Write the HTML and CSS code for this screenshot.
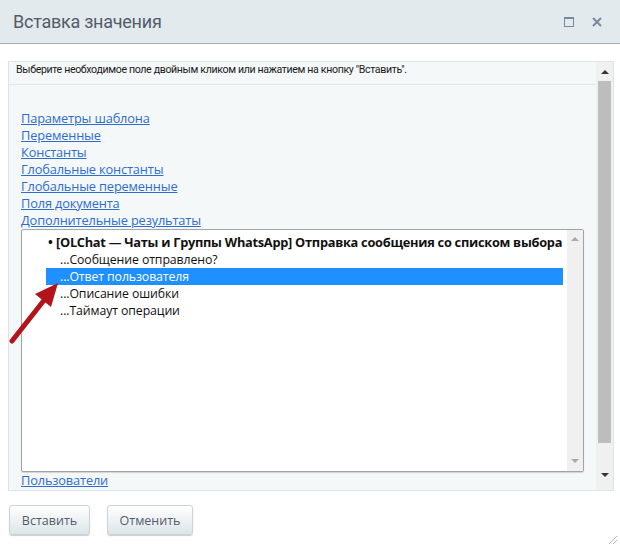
FILE: index.html
```html
<!DOCTYPE html>
<html lang="ru">
<head>
<meta charset="utf-8">
<link rel="stylesheet" href="styles.css">
</head>
<body>
<div class="dialog">
  <div class="header">
    <span class="title">Вставка значения</span>
    <div class="hicons">
      <svg class="hicon" width="10" height="10" viewBox="0 0 10 10"><rect x="0.5" y="0.5" width="9" height="9" fill="none" stroke="#7b8a9b" stroke-width="1"/><rect x="0.5" y="0.5" width="9" height="1.5" fill="#7b8a9b"/></svg>
      <svg class="hicon" width="10" height="10" viewBox="0 0 10 10"><path d="M1 1L9 9M9 1L1 9" stroke="#7b8a9b" stroke-width="2"/></svg>
    </div>
  </div>
  <div class="body">
    <div class="panel">
      <div class="main">
        <div class="hint">Выберите необходимое поле двойным кликом или нажатием на кнопку "Вставить".</div>
        <div class="links">
          <a class="link">Параметры шаблона</a>
          <a class="link">Переменные</a>
          <a class="link">Константы</a>
          <a class="link">Глобальные константы</a>
          <a class="link">Глобальные переменные</a>
          <a class="link">Поля документа</a>
          <a class="link">Дополнительные результаты</a>
          <div class="listbox">
            <div class="list">
              <div class="group"><span class="bullet">•</span>[OLChat — Чаты и Группы WhatsApp] Отправка сообщения со списком выбора</div>
              <div class="item">...Сообщение отправлено?</div>
              <div class="item selected">...Ответ пользователя</div>
              <div class="item">...Описание ошибки</div>
              <div class="item">...Таймаут операции</div>
            </div>
            <div class="iscroll">
              <span class="tri up small"></span>
              <span class="tri down small"></span>
            </div>
          </div>
          <a class="link">Пользователи</a>
        </div>
      </div>
      <div class="scroll">
        <span class="tri up"></span>
        <div class="thumb"></div>
        <span class="tri down"></span>
      </div>
    </div>
    <div class="buttons">
      <button class="btn b1">Вставить</button>
      <button class="btn b2">Отменить</button>
    </div>
  </div>
  <svg class="grip" width="12" height="12" viewBox="0 0 12 12"><path d="M11 3L3 11M11 7L7 11" stroke="#b5b5b5" stroke-width="1"/></svg>
  <svg class="arrow" width="70" height="70" viewBox="0 0 70 70">
    <path d="M3 60 L36 18" stroke="#b3141b" stroke-width="5" stroke-linecap="round"/>
    <path d="M49 2 L26 13 L42 26 Z" fill="#b3141b"/>
  </svg>
</div>
</body>
</html>
```
FILE: styles.css
```css
html, body { margin: 0; padding: 0; }
body {
  width: 620px;
  height: 546px;
  background: #fff;
  font-family: "Open Sans", "Noto Sans", sans-serif;
  overflow: hidden;
}
.dialog { position: relative; width: 620px; height: 546px; }
.header {
  height: 43px;
  background: #e3eaed;
  border-bottom: 1px solid #a9b1b6;
  display: flex;
  align-items: center;
  justify-content: space-between;
  box-sizing: content-box;
}
.title {
  margin-left: 13px;
  font-family: Roboto, "Open Sans", sans-serif;
  font-size: 18px;
  color: #535c69;
  letter-spacing: -0.25px;
}
.hicons { display: flex; gap: 18px; margin-right: 18px; margin-top: 1px; }
.hicon { display: block; }
.body { padding: 17px 6px 0 8px; }
.panel {
  height: 428px;
  border: 1px solid #dbe5eb;
  background: #f5f8f9;
  display: flex;
}
.main { flex: 1; min-width: 0; display: flex; flex-direction: column; }
.hint {
  height: 22px;
  border-bottom: 1px solid #dbe6ee;
  font-family: Roboto, "Open Sans", sans-serif;
  font-size: 10.6px;
  color: #1a1a1a;
  padding-left: 7px;
  line-height: 15px;
  letter-spacing: -0.35px;
}
.links {
  padding: 25px 0 0 12px;
  display: flex;
  flex-direction: column;
  align-items: flex-start;
}
.link {
  font-size: 12.8px;
  line-height: 17px;
  color: #2d6dd0;
  text-decoration: underline;
  letter-spacing: -0.15px;
}
.listbox {
  width: 561px;
  height: 241px;
  border: 1px solid #a3a3a3;
  border-radius: 2px;
  background: #fff;
  display: flex;
  box-shadow: 0 1px 1px rgba(0,0,0,0.15);
}
.list { flex: 1; min-width: 0; overflow: hidden; padding: 4px 4px 0 24px; font-size: 12.3px; color: #111; }
.group {
  height: 17px;
  line-height: 17px;
  font-size: 12.8px;
  font-weight: bold;
  white-space: nowrap;
  letter-spacing: -0.27px;
}
.bullet { display: inline-block; width: 8px; margin-left: 2px; }
.item {
  height: 17px;
  line-height: 17px;
  padding-left: 14px;
  letter-spacing: -0.1px;
}
.item.selected { background: #1e90ff; color: #fff; }
.iscroll {
  width: 16px;
  flex: none;
  background: #f0f0f0;
  display: flex;
  flex-direction: column;
  justify-content: space-between;
  align-items: center;
  padding: 7px 0 8px;
}
.scroll {
  width: 17px;
  background: #f0f0f0;
  display: flex;
  flex-direction: column;
  align-items: center;
  padding-top: 8px;
}
.thumb {
  width: 13px;
  height: 362px;
  background: #bdbdbd;
  margin-top: 7px;
}
.tri { width: 0; height: 0; border-left: 4px solid transparent; border-right: 4px solid transparent; }
.tri.up { border-bottom: 4px solid #333; }
.tri.down { border-top: 4px solid #333; margin-top: 30px; }
.tri.small.up { border-bottom-color: #a9a9a9; }
.tri.small.down { border-top-color: #a9a9a9; margin-top: 0; }
.buttons { display: flex; gap: 17px; padding-top: 14px; margin-left: 1px; }
.btn {
  height: 30px;
  border: 1px solid #ccd3d7;
  border-radius: 3px;
  background: linear-gradient(#ffffff, #dde5e8);
  box-shadow: 0 1px 1px rgba(0,0,0,0.2);
  font-family: "Open Sans", "Noto Sans", sans-serif;
  font-size: 12.5px;
  color: #535c69;
  padding: 0;
}
.b1 { width: 81px; }
.b2 { width: 86px; }
.grip { position: absolute; right: 2px; bottom: 1px; }
.arrow { position: absolute; left: 9px; top: 281px; }
```
